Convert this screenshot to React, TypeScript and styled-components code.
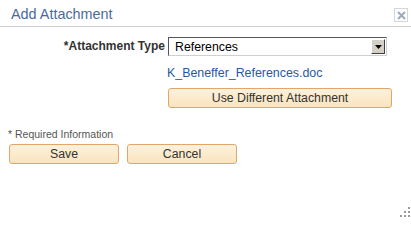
import styled, { createGlobalStyle } from 'styled-components';

const GlobalStyle = createGlobalStyle`
  html, body {
    margin: 0;
    padding: 0;
    background: #ffffff;
    font-family: Arial, "Liberation Sans", sans-serif;
  }
`;

const App: React.FC = () => {
  return (
    <>
      <GlobalStyle />
      <Dialog>
        <Header>
          <Title>Add Attachment</Title>
          <CloseButton aria-label='Close'>
            <svg width='9' height='9' viewBox='0 0 9 9'>
              <path d='M1 1 L8 8 M8 1 L1 8' stroke='#9aabbd' strokeWidth='2' />
            </svg>
          </CloseButton>
        </Header>
        <Body>
          <FormGrid>
            <Label>*Attachment Type</Label>
            <SelectBox>
              <SelectText>References</SelectText>
              <DropButton>
                <svg width='7' height='4' viewBox='0 0 7 4'>
                  <path d='M0 0 L7 0 L3.5 4 Z' fill='#000' />
                </svg>
              </DropButton>
            </SelectBox>
            <span />
            <FileLink href='#'>K_Beneffer_References.doc</FileLink>
            <span />
            <Button $width={224}>Use Different Attachment</Button>
          </FormGrid>
          <Footer>
            <Required>* Required Information</Required>
            <ButtonRow>
              <Button $width={110}>Save</Button>
              <Button $width={110}>Cancel</Button>
            </ButtonRow>
          </Footer>
        </Body>
        <Grip>
          {[
            [8, 0],
            [4, 4],
            [8, 4],
            [0, 8],
            [4, 8],
            [8, 8],
          ].map(([x, y], idx) => (
            <Dot key={idx} style={{ left: x, top: y }} />
          ))}
        </Grip>
      </Dialog>
    </>
  );
};
export default App;

const Dialog = styled.div`
  position: relative;
  width: 411px;
  height: 217px;
  background: #ffffff;
  overflow: hidden;
`;

const Header = styled.div`
  display: flex;
  align-items: flex-start;
  justify-content: space-between;
  height: 27px;
  padding: 0 3px 0 11px;
  border-bottom: 1px solid #cfcfcf;
  box-sizing: border-box;
`;

const Title = styled.h1`
  margin: 5px 0 0 0;
  font-size: 14.4px;
  font-weight: normal;
  color: #4c6a9b;
  line-height: 19px;
`;

const CloseButton = styled.button`
  display: flex;
  align-items: center;
  justify-content: center;
  width: 14px;
  height: 14px;
  padding: 0;
  margin-top: 8px;
  background: #ffffff;
  border: 1px solid #d6d6d6;
  box-sizing: border-box;
`;

const Body = styled.div`
  padding: 10px 0 0 9px;
`;

const FormGrid = styled.div`
  display: grid;
  grid-template-columns: 156px 224px;
  column-gap: 3px;
  row-gap: 0;
  align-items: center;
`;

const Label = styled.label`
  justify-self: end;
  font-size: 12px;
  font-weight: bold;
  color: #333333;
  height: 19px;
  line-height: 19px;
`;

const SelectBox = styled.div`
  display: flex;
  align-items: center;
  justify-content: space-between;
  width: 219px;
  height: 19px;
  box-sizing: border-box;
  border: 1px solid;
  border-color: #555555 #cfcfcf #cfcfcf #555555;
  background: #ffffff;
  padding: 0 1px 0 6px;
`;

const SelectText = styled.span`
  font-size: 12.3px;
  color: #000000;
`;

const DropButton = styled.span`
  display: flex;
  align-items: center;
  justify-content: center;
  width: 14px;
  height: 15px;
  box-sizing: border-box;
  background: #d4d0c8;
  border: 1px solid;
  border-color: #ffffff #404040 #404040 #ffffff;
`;

const FileLink = styled.a`
  display: block;
  margin-top: 10px;
  margin-left: -1px;
  font-size: 12.4px;
  line-height: 15px;
  color: #1d5aa7;
  text-decoration: none;
`;

const Button = styled.button<{ $width: number }>`
  width: ${(p) => p.$width}px;
  height: 20px;
  margin-top: 7px;
  padding: 0;
  box-sizing: border-box;
  border: 1px solid #e2a66b;
  border-radius: 3px;
  background: linear-gradient(#fdf1dc, #fae4bf);
  font-family: Arial, "Liberation Sans", sans-serif;
  font-size: 12.3px;
  color: #333333;
`;

const Footer = styled.div`
  margin-top: 19px;
  margin-left: -1px;
`;

const Required = styled.div`
  font-size: 10.5px;
  color: #555555;
  line-height: 14px;
`;

const ButtonRow = styled.div`
  display: flex;
  gap: 8px;
  margin-top: -4px;
  margin-left: 1px;
`;

const Grip = styled.div`
  position: absolute;
  right: 1px;
  bottom: 0;
  width: 10px;
  height: 10px;
`;

const Dot = styled.span`
  position: absolute;
  width: 2px;
  height: 2px;
  background: #9a9a9a;
`;
